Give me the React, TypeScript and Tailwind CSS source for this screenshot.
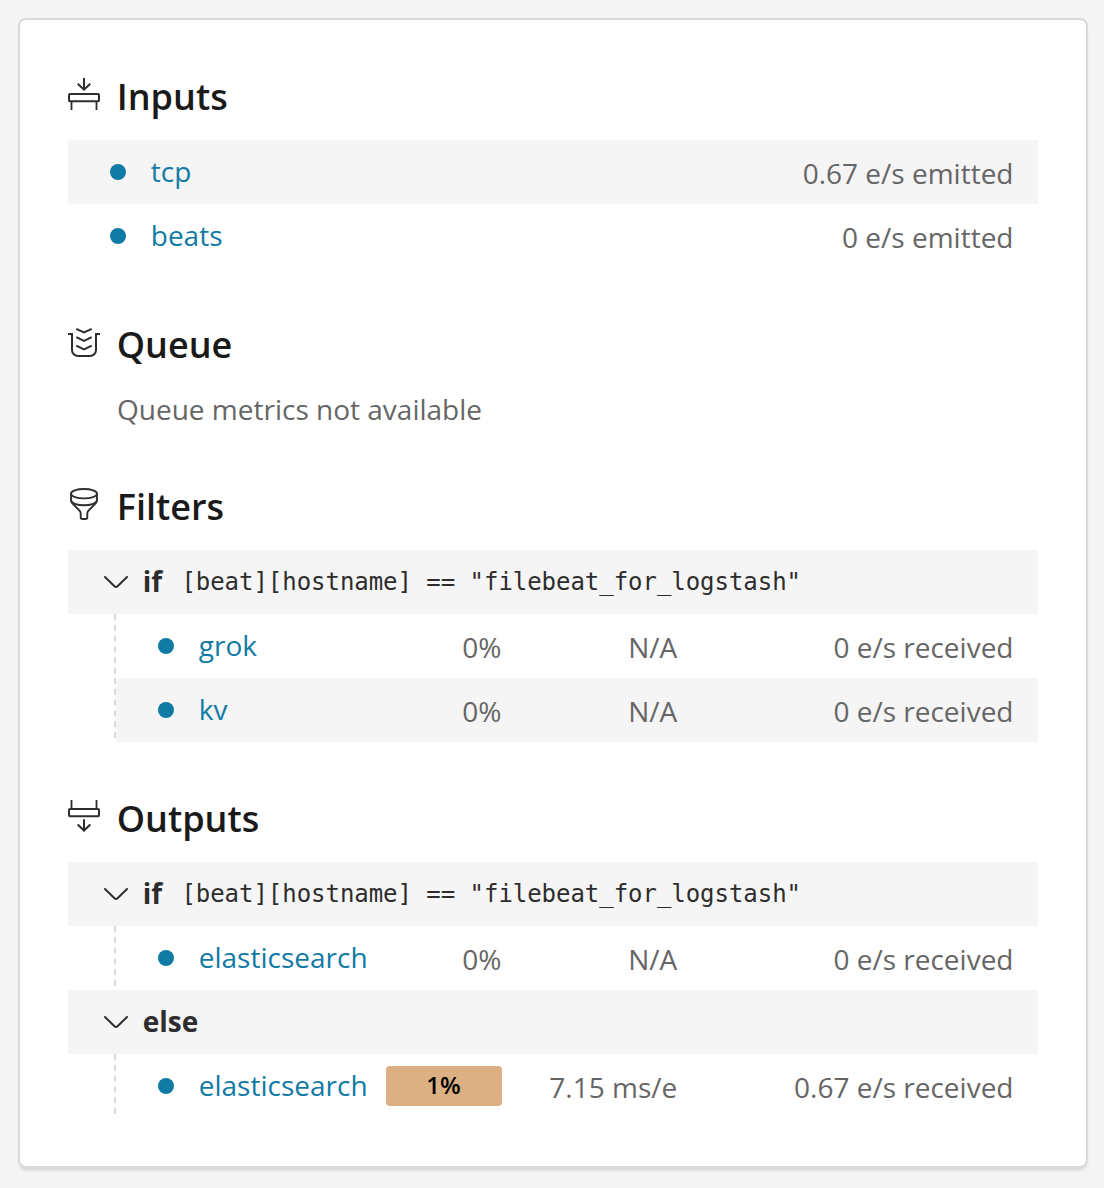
import type { ReactNode } from "react";

const svgProps = {
  width: 32,
  height: 32,
  viewBox: "0 0 32 32",
  fill: "none",
  stroke: "#2d2d2d",
  strokeWidth: 2,
} as const;

const InputsIcon = () => (
  <svg {...svgProps}>
    <path d="M16 0v12M9.700 5.700l6.300 6l6.300-6" />
    <rect x="1" y="16" width="30" height="7.200" rx="1" />
    <path d="M3.500 24v8M28.500 24v8" strokeWidth="1.800" />
  </svg>
);
const QueueIcon = () => (
  <svg {...svgProps}>
    <path d="M0 8h4v16a6 6 0 0 0 6 6h12a6 6 0 0 0 6-6v-16h4" />
    <path d="M8.300 2.800l7.700 3.700l7.700-3.700M8.300 11.200l7.700 3.700l7.700-3.700M8.300 19.700l7.700 3.700l7.700-3.700" />
  </svg>
);
const FiltersIcon = () => (
  <svg {...svgProps} strokeWidth={1.9} strokeLinejoin="round">
    <ellipse cx="16" cy="5.700" rx="13" ry="4.700" />
    <path d="M3 5.700v6.600q0 1.600 1.200 2.800l7.300 7.600q1.200 1.200 1.200 2.800v3.700q0 1.800 1.800 1.800h3q1.800 0 1.800-1.800v-3.700q0-1.600 1.200-2.800l7.300-7.600q1.200-1.200 1.200-2.800v-6.600" />
    <path d="M3.300 13.300c3 5.300 22.400 5.300 25.400 0" />
  </svg>
);
const OutputsIcon = () => (
  <svg {...svgProps}>
    <path d="M3.500 0v8M28.500 0v8" strokeWidth="1.800" />
    <rect x="1" y="9" width="30" height="7.200" rx="1" />
    <path d="M16 19.300v11.500M9.700 24.500l6.300 6l6.300-6" />
  </svg>
);

function Section({ icon, title, children, className }: { icon: ReactNode; title: string; children: ReactNode; className: string }) {
  return (
    <section className={className}>
      <h2 className="flex h-[40px] items-center text-[36px] font-semibold leading-[40px] text-[#1a1a1a]">
        <span className="mr-[16.75px] -mt-[6px]">{icon}</span>
        <span>{title}</span>
      </h2>
      {children}
    </section>
  );
}

function Dot() {
  return <span className="size-4 shrink-0 rounded-full bg-[#117aa5]" />;
}

function InputRow({ name, rate, shaded }: { name: string; rate: string; shaded?: boolean }) {
  return (
    <div className={`flex h-16 items-center pl-[42px] pr-[24.5px] ${shaded ? "bg-[#f5f5f5]" : ""}`}>
      <Dot />
      <span className="-mt-[2px] ml-[24.75px] text-[#117aa5]">{name}</span>
      <span className="ml-auto mt-[2px]">{rate}</span>
    </div>
  );
}

function Statement({ keyword, condition }: { keyword: string; condition?: string }) {
  return (
    <div className="flex h-16 items-center bg-[#f5f5f5] pl-9 text-[#2d2d2d]">
      <svg width="24" height="14" viewBox="0 0 24 14" fill="none" stroke="#2d2d2d" strokeWidth="2" strokeLinecap="round" strokeLinejoin="round">
        <path d="M1 2l9.500 9.300q1.500 1.400 3 0l9.500-9.300" />
      </svg>
      <span className="-mt-[2px] ml-[14.75px] font-bold">{keyword}</span>
      {condition && (
        <code className="ml-[19.25px] font-['DejaVu_Sans_Mono',monospace] text-[24px] tracking-[-0.04px]">{condition}</code>
      )}
    </div>
  );
}

function PluginRow({ name, cpu, latency, rate, shaded, hot }: { name: string; cpu: string; latency: string; rate: string; shaded?: boolean; hot?: boolean }) {
  return (
    <div className="ml-[46px] flex h-16">
      <svg width="2" height="64" className="shrink-0">
        <path d="M1 0v60" stroke="#d9d9d9" strokeWidth="2" strokeDasharray="6 4.8" />
      </svg>
      <div className={`flex flex-1 items-center pl-[42px] pr-[24.5px] ${shaded ? "bg-[#f5f5f5]" : ""}`}>
        <Dot />
        <span className="-mt-[2px] ml-[24.75px] w-[187.25px] text-[#117aa5]">{name}</span>
        {hot ? (
          <span className="flex h-10 w-[116px] items-center justify-center rounded-[4px] bg-[#dcb082] pb-[2px] pr-[1px] text-[24px] font-semibold text-black">
            {cpu}
          </span>
        ) : (
          <span className="mt-[2px] w-[116px] pr-[0.5px] text-right">{cpu}</span>
        )}
        <span className="mt-[2px] w-[175.25px] text-right">{latency}</span>
        <span className="ml-auto mt-[2px]">{rate}</span>
      </div>
    </div>
  );
}

const condition = '[beat][hostname] == "filebeat_for_logstash"';

export default function App() {
  return (
    <main className="h-[1188px] w-[1104px] bg-[#f5f5f5] px-[18px] pt-[18px] font-['Open_Sans',sans-serif] text-[28px] leading-[42px] text-[#666]">
      <div className="h-[1150px] w-[1070px] rounded-[8px] border-2 border-[#d9d9d9] bg-white px-12 pt-[57px] shadow-[0_4px_4px_-2px_rgba(0,0,0,0.15)]">
        <Section icon={<InputsIcon />} title="Inputs" className="h-[248px]">
          <div className="mt-[23px]">
            <InputRow name="tcp" rate="0.67 e/s emitted" shaded />
            <InputRow name="beats" rate="0 e/s emitted" />
          </div>
        </Section>
        <Section icon={<QueueIcon />} title="Queue" className="h-[162px]">
          <p className="ml-[49px] mt-[23px]">Queue metrics not available</p>
        </Section>
        <Section icon={<FiltersIcon />} title="Filters" className="h-[312px]">
          <div className="mt-[23px]">
            <Statement keyword="if" condition={condition} />
            <PluginRow name="grok" cpu="0%" latency="N/A" rate="0 e/s received" />
            <PluginRow name="kv" cpu="0%" latency="N/A" rate="0 e/s received" shaded />
          </div>
        </Section>
        <Section icon={<OutputsIcon />} title="Outputs" className="">
          <div className="mt-[23px]">
            <Statement keyword="if" condition={condition} />
            <PluginRow name="elasticsearch" cpu="0%" latency="N/A" rate="0 e/s received" />
            <Statement keyword="else" />
            <PluginRow name="elasticsearch" cpu="1%" latency="7.15 ms/e" rate="0.67 e/s received" hot />
          </div>
        </Section>
      </div>
    </main>
  );
}
